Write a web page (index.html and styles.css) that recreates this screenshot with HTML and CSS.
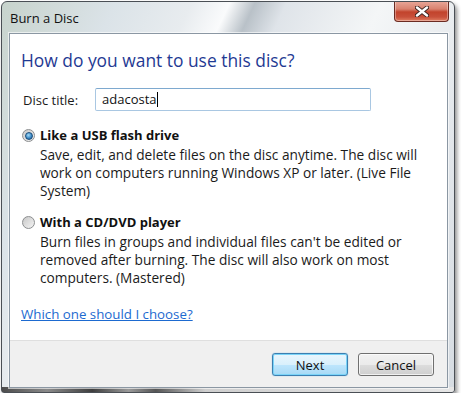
FILE: index.html
```html
<!DOCTYPE html>
<html lang="en">
<head>
    <meta charset="UTF-8">
    <meta name="viewport" content="width=device-width, initial-scale=1.0">
    <title>Burn a Disc</title>
    <link rel="stylesheet" href="styles.css">
</head>
<body>

<div class="window">
    <div class="titlebar">
        <span class="title">Burn a Disc</span>
        <button class="close" title="Close">
            <svg width="14" height="11" viewBox="0 0 14 11">
                <path d="M2 1.5 L12 9.5 M12 1.5 L2 9.5" stroke="#3a2420" stroke-width="4.2" stroke-linecap="round"/>
                <path d="M2 1.5 L12 9.5 M12 1.5 L2 9.5" stroke="#fff" stroke-width="2.4" stroke-linecap="round"/>
            </svg>
        </button>
    </div>

    <div class="client">
        <div class="content">
            <h1 class="instruction">How do you want to use this disc?</h1>

            <div class="field">
                <label for="discTitle">Disc title:</label>
                <div class="textbox" id="discTitle">adacosta<span class="caret"></span></div>
            </div>

            <div class="option">
                <div class="option-head">
                    <span class="radio checked"></span>
                    <span class="option-title">Like a USB flash drive</span>
                </div>
                <p class="option-desc">Save, edit, and delete files on the disc anytime. The disc will work on computers running Windows XP or later. (Live File System)</p>
            </div>

            <div class="option second">
                <div class="option-head">
                    <span class="radio"></span>
                    <span class="option-title">With a CD/DVD player</span>
                </div>
                <p class="option-desc">Burn files in groups and individual files can't be edited or removed after burning. The disc will also work on most computers. (Mastered)</p>
            </div>

            <a class="help" href="#">Which one should I choose?</a>
        </div>

        <div class="footer">
            <button class="btn default">Next</button>
            <button class="btn">Cancel</button>
        </div>
    </div>
</div>

</body>
</html>
```

FILE: styles.css
```css
body {
    margin: 0;
    padding: 1px 0 0 1px;
    background: #fff;
    font-family: "Open Sans", "Noto Sans", Arial, sans-serif;
    color: #1b1b1b;
}
.window {
    width: 452px;
    height: 390px;
    border: 1px solid #4a4f55;
    border-radius: 6px 6px 3px 3px;
    box-shadow: 2px 3px 4px rgba(0, 0, 0, 0.45);
    background:
        linear-gradient(to right, #4c4c4c 0%, #8a8a8a 10%, #3e3e3e 20%, #9a9a9a 28%, #555 34%, #cfcfcf 45%, #e6e6e6 100%) bottom / 100% 5px no-repeat,
        linear-gradient(115deg, #c7d3cc 0%, #dbe3e8 18%, #e8ecef 30%, #fafbfc 36%, #b9c1c8 40%, #dfe4e9 45%, #f4f6f7 60%, #e3e7eb 80%, #d6dce2 100%);
    display: flex;
    flex-direction: column;
    overflow: hidden;
}
.titlebar {
    height: 31px;
    display: flex;
    align-items: flex-start;
    padding: 0 5px 0 8px;
}
.title {
    font-size: 13px;
    line-height: 18px;
    margin-top: 7px;
    color: #111;
}
.close {
    margin-left: auto;
    margin-top: -1px;
    width: 55px;
    height: 21px;
    padding: 0;
    border: 1px solid #6b2b22;
    border-top: none;
    border-radius: 0 0 4px 4px;
    background: linear-gradient(#e9a99b 0%, #d9826f 40%, #c2432c 55%, #c8503a 80%, #e07e62 100%);
    box-shadow: inset 0 0 0 1px rgba(255, 255, 255, 0.35);
    display: flex;
    align-items: center;
    justify-content: center;
}
.client {
    flex: 1;
    margin: 0 6px 4px 7px;
    border: 1px solid #8b97a3;
    box-shadow: 0 0 0 1px rgba(255, 255, 255, 0.6);
    display: flex;
    flex-direction: column;
    background: #fff;
}
.content {
    flex: 1;
    padding: 14px 24px 0 11px;
    font-size: 13px;
}
.instruction {
    margin: 0;
    font-size: 17.4px;
    line-height: 24px;
    font-weight: normal;
    color: #1f3a93;
}
.field {
    display: flex;
    align-items: center;
    margin-top: 16px;
}
.field label {
    width: 72px;
    padding-left: 2px;
}
.textbox {
    flex: none;
    width: 268px;
    height: 21px;
    border: 1px solid #a9c7e2;
    border-top-color: #7ea9cf;
    border-radius: 2px;
    padding-left: 6px;
    line-height: 21px;
    color: #111;
}
.caret {
    display: inline-block;
    width: 1px;
    height: 15px;
    background: #000;
    vertical-align: -3px;
}
.option {
    margin-top: 15px;
}
.option.second {
    margin-top: 13px;
}
.option-head {
    display: flex;
    align-items: center;
    height: 18px;
}
.radio {
    flex: none;
    width: 11px;
    height: 11px;
    border: 1px solid #8c8e90;
    border-radius: 50%;
    margin: 0 5px 0 1px;
    background: linear-gradient(135deg, #c8c8c8, #f4f4f4);
    position: relative;
}
.radio.checked::after {
    content: "";
    position: absolute;
    left: 2px;
    top: 2px;
    width: 6px;
    height: 6px;
    border-radius: 50%;
    border: 0.5px solid #1b4d7a;
    background: radial-gradient(circle at 40% 35%, #a4dbf8 0%, #3d8cc8 55%, #164f85 100%);
}
.option-title {
    font-weight: bold;
    color: #111;
}
.option-desc {
    margin: 2px 0 0 19px;
    font-size: 13.7px;
    line-height: 18px;
    color: #1b1b1b;
}
.help {
    display: inline-block;
    margin-top: 18px;
    font-size: 13.3px;
    color: #1d6ad0;
    line-height: 18px;
}
.footer {
    height: 47px;
    border-top: 1px solid #dfdfdf;
    background: #f0f0f0;
    display: flex;
    justify-content: flex-end;
    align-items: flex-start;
    gap: 10px;
    padding: 12px 13px 0 0;
    box-sizing: border-box;
}
.btn {
    width: 76px;
    height: 23px;
    font-family: inherit;
    font-size: 13px;
    color: #111;
    border: 1px solid #707070;
    border-radius: 3px;
    background: linear-gradient(#f2f2f2 0%, #ebebeb 50%, #dddddd 51%, #cfcfcf 100%);
    box-shadow: inset 0 0 0 1px rgba(255, 255, 255, 0.7);
    padding: 0;
}
.btn.default {
    border-color: #3c7fb1;
    background: linear-gradient(#eaf6fd 0%, #d9f0fc 50%, #bee6fd 51%, #a7d9f5 100%);
    box-shadow: inset 0 0 0 1px #7ad4f8, 0 0 1px #48a8e0;
}
```
